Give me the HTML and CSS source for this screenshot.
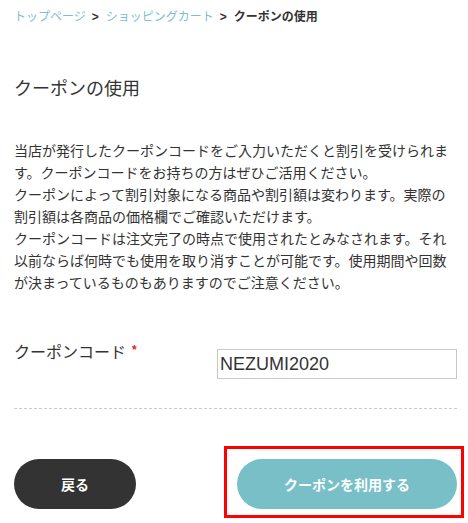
FILE: index.html
```html
<!DOCTYPE html>
<html lang="ja">
<head>
<meta charset="utf-8">
<title>クーポンの使用</title>
<link rel="stylesheet" href="styles.css">
</head>
<body>
<div class="page">
  <nav class="breadcrumb">
    <a class="crumb-link" href="#">トップページ</a><span class="sep">&gt;</span><a class="crumb-link" href="#">ショッピングカート</a><span class="sep">&gt;</span><span class="crumb-current">クーポンの使用</span>
  </nav>

  <h1 class="title">クーポンの使用</h1>

  <p class="desc">当店が発行したクーポンコードをご入力いただくと割引を受けられます。クーポンコードをお持ちの方はぜひご活用ください。<br>クーポンによって割引対象になる商品や割引額は変わります。実際の割引額は各商品の価格欄でご確認いただけます。<br>クーポンコードは注文完了の時点で使用されたとみなされます。それ以前ならば何時でも使用を取り消すことが可能です。使用期間や回数が決まっているものもありますのでご注意ください。</p>

  <div class="field">
    <label class="field-label" for="code">クーポンコード<span class="req">*</span></label>
    <input class="field-input" id="code" type="text" value="NEZUMI2020">
  </div>

  <div class="divider"></div>

  <div class="actions">
    <a class="btn btn-back" href="#">戻る</a>
    <div class="highlight">
      <a class="btn btn-apply" href="#">クーポンを利用する</a>
    </div>
  </div>
</div>
</body>
</html>
```

FILE: styles.css
```css
* {
  box-sizing: border-box;
}

html, body {
  margin: 0;
  padding: 0;
  background: #ffffff;
}

body {
  font-family: "Noto Sans CJK JP", "Noto Sans", sans-serif;
  color: #333333;
}

.page {
  padding: 8px 11px 0 14px;
}

.breadcrumb {
  font-size: 12px;
  line-height: 16px;
  white-space: nowrap;
}

.crumb-link {
  color: #7bbfc9;
  text-decoration: none;
}

.sep {
  display: inline-block;
  margin: 0 7px 0 6px;
  font-weight: bold;
  color: #333333;
  font-family: "Liberation Sans", sans-serif;
}

.crumb-current {
  font-weight: bold;
  color: #333333;
}

.title {
  margin: 49px 0 0;
  font-size: 18px;
  line-height: 26px;
  font-weight: normal;
  color: #333333;
}

.desc {
  margin: 39px 0 0;
  font-size: 14px;
  line-height: 22px;
  color: #333333;
}

.field {
  display: flex;
  justify-content: space-between;
  align-items: flex-start;
  margin-top: 47px;
}

.field-label {
  font-size: 16px;
  line-height: 22px;
  color: #333333;
}

.req {
  color: #e0202a;
  font-size: 12px;
  font-weight: bold;
  margin-left: 6px;
  position: relative;
  top: -4px;
  font-family: "Liberation Sans", sans-serif;
}

.field-input {
  margin-top: 9px;
  width: 240px;
  height: 30px;
  border: 1px solid #c8c8c8;
  border-radius: 0;
  padding: 0 0 0 2px;
  font-family: "Liberation Sans", sans-serif;
  font-size: 18px;
  color: #333333;
  background: #ffffff;
  outline: none;
}

.divider {
  margin-top: 29px;
  border-top: 1px dashed #cccccc;
}

.actions {
  display: flex;
  justify-content: space-between;
  align-items: flex-start;
  margin-top: 37px;
  margin-right: -7px;
}

.btn {
  display: flex;
  align-items: center;
  justify-content: center;
  height: 50px;
  border-radius: 25px;
  color: #ffffff;
  font-size: 14px;
  font-weight: bold;
  text-decoration: none;
}

.btn-back {
  width: 122px;
  margin-top: 13px;
  background: #333333;
}

.highlight {
  width: 240px;
  border: 3px solid #ff0000;
  padding: 10px 4px 6px 10px;
}

.btn-apply {
  width: 220px;
  background: #78bfc8;
}
```
